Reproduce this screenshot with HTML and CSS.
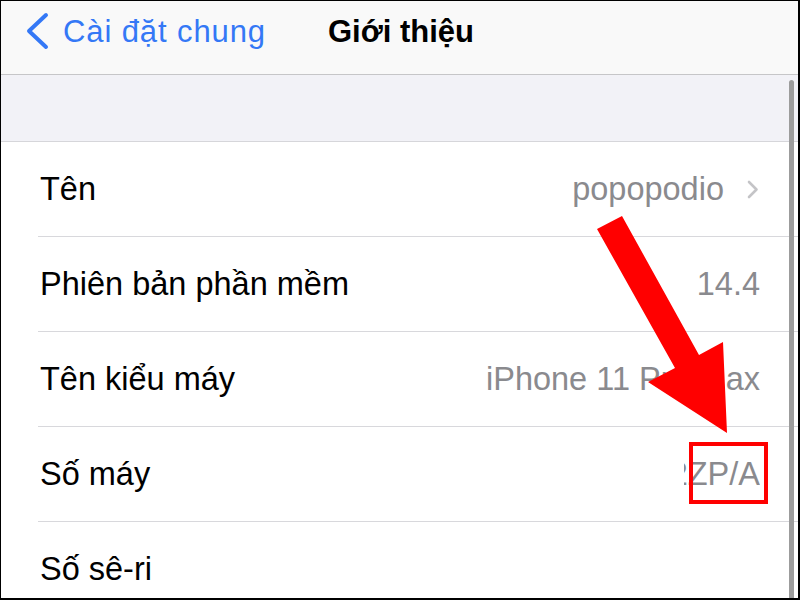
FILE: index.html
```html
<!DOCTYPE html>
<html lang="vi">
<head>
    <meta charset="utf-8">
    <title>Giới thiệu</title>
    <link rel="stylesheet" href="styles.css">
</head>
<body>
    <div class="frame">
        <header class="nav">
            <a class="back" href="#">
                <svg class="back-icon" width="24" height="38" viewBox="0 0 24 38">
                    <polyline points="21,3 4,19 21,35" fill="none" stroke="#3478f6" stroke-width="4" stroke-linecap="round" stroke-linejoin="round"/>
                </svg>
                <span>Cài đặt chung</span>
            </a>
            <h1 class="title">Giới thiệu</h1>
        </header>

        <div class="spacer"></div>

        <ul class="list">
            <li class="row">
                <span class="label">Tên</span>
                <span class="value">popopodio
                    <svg class="chev" width="12" height="19" viewBox="0 0 12 19">
                        <polyline points="2,2 9.5,9.5 2,17" fill="none" stroke="#c4c4c7" stroke-width="2.6" stroke-linecap="round" stroke-linejoin="round"/>
                    </svg>
                </span>
            </li>
            <li class="row">
                <span class="label">Phiên bản phần mềm</span>
                <span class="value">14.4</span>
            </li>
            <li class="row">
                <span class="label">Tên kiểu máy</span>
                <span class="value">iPhone 11 Pro Max</span>
            </li>
            <li class="row">
                <span class="label">Số máy</span>
                <span class="value clip"><span>2ZP/A</span></span>
            </li>
            <li class="row">
                <span class="label">Số sê-ri</span>
                <span class="value"></span>
            </li>
        </ul>

        <div class="scrollbar"></div>

        <!-- annotation overlay -->
        <svg class="arrow" width="798" height="597" viewBox="1 1 798 597">
            <polygon points="622,216 699,355 723,342 727,433 648,382 675,368 597,229" fill="#ff0000"/>
        </svg>
        <div class="mark"></div>
    </div>
</body>
</html>
```

FILE: styles.css
```css
html, body {
    margin: 0;
    padding: 0;
    background: #fff;
}
.frame {
    position: relative;
    box-sizing: border-box;
    width: 800px;
    height: 600px;
    overflow: hidden;
    border: 1px solid #000;
    border-right-width: 2px;
    border-bottom-width: 2px;
    background: #fff;
    font-family: "Liberation Sans", Arial, sans-serif;
}

/* top bar */
.nav {
    display: flex;
    align-items: center;
    height: 61px;
    padding: 0 0 12px 24px;
    background: #f9f9f9;
    border-bottom: 1px solid #c6c6c8;
}
.back {
    display: flex;
    align-items: center;
    width: 303px;
    color: #3478f6;
    text-decoration: none;
    font-size: 31px;
    letter-spacing: 0.9px;
}
.back-icon {
    margin-right: 14px;
    margin-top: -1px;
}
.title {
    margin: 0;
    font-size: 31px;
    font-weight: bold;
    color: #000;
}

.spacer {
    height: 66px;
    background: #f2f2f7;
    border-bottom: 1px solid #d6d6da;
}

/* rows */
.list {
    list-style: none;
    margin: 0;
    padding: 0;
}
.row {
    display: flex;
    align-items: center;
    justify-content: space-between;
    height: 94px;
    margin-left: 37px;
    padding: 0 38px 0 2px;
    border-bottom: 1px solid #d8d8dc;
    font-size: 32.5px;
}
.label {
    color: #000;
    white-space: nowrap;
}
.value {
    display: flex;
    align-items: center;
    color: #8a8a8e;
    white-space: nowrap;
}
.chev {
    margin-left: 23px;
    margin-right: 1px;
}
.value.clip {
    justify-content: flex-end;
    width: 76px;
    overflow: hidden;
}

.scrollbar {
    position: absolute;
    left: 788px;
    top: 79px;
    bottom: -4px;
    width: 5px;
    background: #9c9c9c;
    border-radius: 3px;
}

.arrow {
    position: absolute;
    left: 0;
    top: 0;
}
.mark {
    position: absolute;
    left: 688px;
    top: 441px;
    width: 79px;
    height: 62px;
    box-sizing: border-box;
    border: 4px solid #ff0000;
}
```
